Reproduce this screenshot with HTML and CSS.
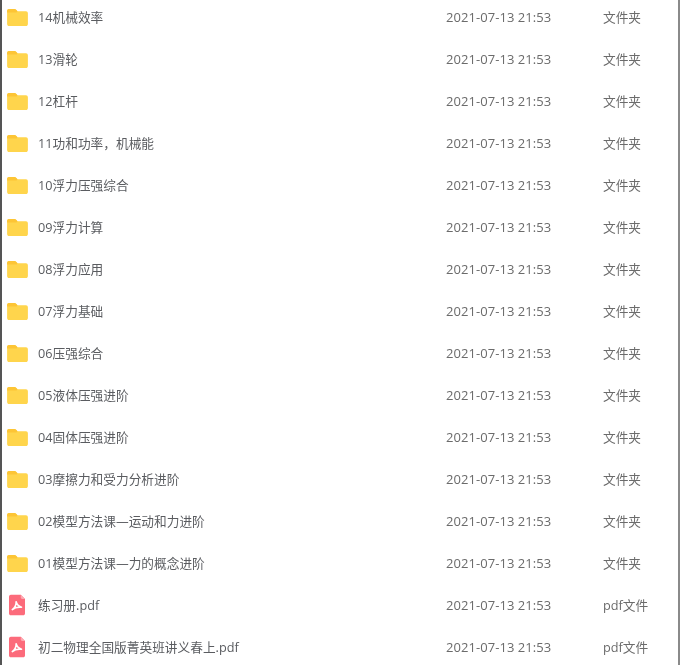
FILE: index.html
```html
<!DOCTYPE html>
<html lang="zh-CN">
<head>
    <meta charset="UTF-8">
    <meta name="viewport" content="width=device-width, initial-scale=1.0">
    <title>文件列表</title>
    <link rel="stylesheet" href="styles.css">
</head>
<body>
    <svg class="icon-defs" width="0" height="0" aria-hidden="true">
        <symbol id="folder" viewBox="0 0 22 18">
            <path d="M0 2.200C0 1 .9 0 2.100 0h5.600c.6 0 1.100.2 1.500.6L11 2.500h9c1.100 0 2 .9 2 2v11.300c0 1.200-.9 2.200-2 2.200H2c-1.100 0-2-1-2-2.200z" fill="#ffd54c"/>
            <path d="M0 2.200C0 1 .9 0 2.100 0h5.600c.6 0 1.100.2 1.500.6L11 2.500l-1 1.300H0z" fill="#fdc535"/>
        </symbol>
        <symbol id="pdf" viewBox="0 0 17 22">
            <path d="M2 0h10.500L17 4.500V20c0 1.100-.9 2-2 2H2c-1.100 0-2-.9-2-2V2C0 .9.900 0 2 0z" fill="#fc6b7b"/>
            <path d="M12.500 0L17 4.500h-3c-.8 0-1.500-.7-1.500-1.500z" fill="#fea9b1"/>
            <path d="M7.600 7.500c.1 3-1.500 6.400-4.100 8.400 2.600-2.200 5.800-3 9.800-2.500-2.800-1-5.200-3.200-5.700-5.900z" fill="none" stroke="#fff" stroke-width="1.700" stroke-linejoin="round"/>
        </symbol>
    </svg>

    <main class="file-list">
        <div class="file-row">
            <svg class="icon icon-folder"><use href="#folder"/></svg>
            <span class="file-name">14机械效率</span>
            <span class="file-date">2021-07-13 21:53</span>
            <span class="file-type">文件夹</span>
        </div>
        <div class="file-row">
            <svg class="icon icon-folder"><use href="#folder"/></svg>
            <span class="file-name">13滑轮</span>
            <span class="file-date">2021-07-13 21:53</span>
            <span class="file-type">文件夹</span>
        </div>
        <div class="file-row">
            <svg class="icon icon-folder"><use href="#folder"/></svg>
            <span class="file-name">12杠杆</span>
            <span class="file-date">2021-07-13 21:53</span>
            <span class="file-type">文件夹</span>
        </div>
        <div class="file-row">
            <svg class="icon icon-folder"><use href="#folder"/></svg>
            <span class="file-name">11功和功率，机械能</span>
            <span class="file-date">2021-07-13 21:53</span>
            <span class="file-type">文件夹</span>
        </div>
        <div class="file-row">
            <svg class="icon icon-folder"><use href="#folder"/></svg>
            <span class="file-name">10浮力压强综合</span>
            <span class="file-date">2021-07-13 21:53</span>
            <span class="file-type">文件夹</span>
        </div>
        <div class="file-row">
            <svg class="icon icon-folder"><use href="#folder"/></svg>
            <span class="file-name">09浮力计算</span>
            <span class="file-date">2021-07-13 21:53</span>
            <span class="file-type">文件夹</span>
        </div>
        <div class="file-row">
            <svg class="icon icon-folder"><use href="#folder"/></svg>
            <span class="file-name">08浮力应用</span>
            <span class="file-date">2021-07-13 21:53</span>
            <span class="file-type">文件夹</span>
        </div>
        <div class="file-row">
            <svg class="icon icon-folder"><use href="#folder"/></svg>
            <span class="file-name">07浮力基础</span>
            <span class="file-date">2021-07-13 21:53</span>
            <span class="file-type">文件夹</span>
        </div>
        <div class="file-row">
            <svg class="icon icon-folder"><use href="#folder"/></svg>
            <span class="file-name">06压强综合</span>
            <span class="file-date">2021-07-13 21:53</span>
            <span class="file-type">文件夹</span>
        </div>
        <div class="file-row">
            <svg class="icon icon-folder"><use href="#folder"/></svg>
            <span class="file-name">05液体压强进阶</span>
            <span class="file-date">2021-07-13 21:53</span>
            <span class="file-type">文件夹</span>
        </div>
        <div class="file-row">
            <svg class="icon icon-folder"><use href="#folder"/></svg>
            <span class="file-name">04固体压强进阶</span>
            <span class="file-date">2021-07-13 21:53</span>
            <span class="file-type">文件夹</span>
        </div>
        <div class="file-row">
            <svg class="icon icon-folder"><use href="#folder"/></svg>
            <span class="file-name">03摩擦力和受力分析进阶</span>
            <span class="file-date">2021-07-13 21:53</span>
            <span class="file-type">文件夹</span>
        </div>
        <div class="file-row">
            <svg class="icon icon-folder"><use href="#folder"/></svg>
            <span class="file-name">02模型方法课—运动和力进阶</span>
            <span class="file-date">2021-07-13 21:53</span>
            <span class="file-type">文件夹</span>
        </div>
        <div class="file-row">
            <svg class="icon icon-folder"><use href="#folder"/></svg>
            <span class="file-name">01模型方法课—力的概念进阶</span>
            <span class="file-date">2021-07-13 21:53</span>
            <span class="file-type">文件夹</span>
        </div>
        <div class="file-row">
            <svg class="icon icon-pdf"><use href="#pdf"/></svg>
            <span class="file-name">练习册.pdf</span>
            <span class="file-date">2021-07-13 21:53</span>
            <span class="file-type">pdf文件</span>
        </div>
        <div class="file-row">
            <svg class="icon icon-pdf"><use href="#pdf"/></svg>
            <span class="file-name">初二物理全国版菁英班讲义春上.pdf</span>
            <span class="file-date">2021-07-13 21:53</span>
            <span class="file-type">pdf文件</span>
        </div>
    </main>
</body>
</html>
```

FILE: styles.css
```css
body {
    margin: 0;
    height: 665px;
    overflow: hidden;
    box-sizing: border-box;
    background-color: #ffffff;
    border-left: 2px solid #555555;
    border-right: 2px solid #8a8a8a;
    font-family: "Open Sans", "Noto Sans CJK SC", sans-serif;
    font-size: 13px;
    line-height: 20px;
    color: #6b6b6b;
}

.icon-defs {
    display: none;
}

.file-list {
    margin-top: -4px;
    filter: blur(0.5px);
}

.file-row {
    display: grid;
    grid-template-columns: 36px 408px 157px 1fr;
    align-items: center;
    height: 42px;
}

.icon {
    justify-self: start;
}

.icon-folder {
    width: 21px;
    height: 17px;
    margin-left: 5px;
}

.icon-pdf {
    width: 16px;
    height: 22px;
    margin-left: 7px;
}

.file-name {
    color: #5a5c60;
    font-size: 12.7px;
    white-space: nowrap;
}

.file-date {
    letter-spacing: 0.06px;
}

.file-type {
    font-size: 12.7px;
}
```
